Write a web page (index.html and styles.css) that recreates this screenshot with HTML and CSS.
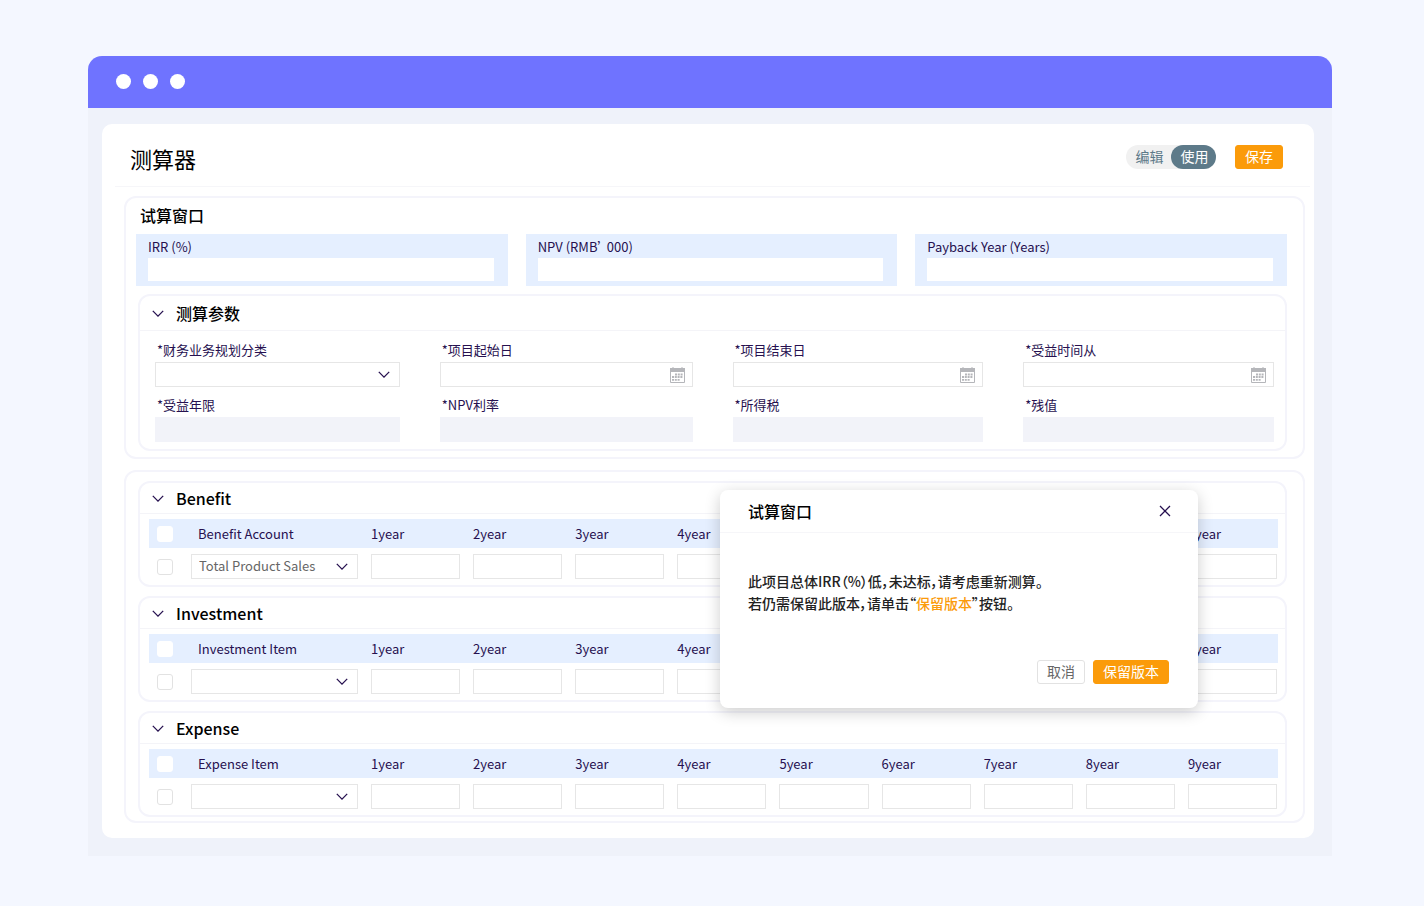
FILE: index.html
```
<!DOCTYPE html>
<html lang="zh-CN">
<head>
	<meta charset="UTF-8">
	<title>测算器</title>
	<link rel="stylesheet" href="styles.css">
</head>
<body>
<svg class="icons" aria-hidden="true">
	<symbol id="arrow" viewBox="0 0 12 8"><path d="M.8 1.9 6 7.1 11.2 1.9" fill="none" stroke="currentColor" stroke-width="1.3"/></symbol>
	<symbol id="cross" viewBox="0 0 12 12"><path d="M1 1 11 11M11 1 1 11" fill="none" stroke="currentColor" stroke-width="1.3"/></symbol>
	<symbol id="calendar" viewBox="0 0 15 16">
		<path d="M.5 2V15.5H14.5V2" fill="none" stroke="currentColor"/>
		<path d="M0 1H2V.5H4V1H11V.5H13V1H15V5H0Z" fill="currentColor"/>
		<path d="M5 7.5H13M2 10H13M2 12.8H10" fill="none" stroke="currentColor" stroke-width="1.8" stroke-dasharray="2 .8"/>
	</symbol>
</svg>

<div class="window">
	<div class="bar"><i></i><i></i><i></i></div>
	<main class="panel">
		<header class="head">
			<h1>测算器</h1>
			<div class="actions">
				<div class="switch">
					<button type="button">编辑</button>
					<button type="button" class="on">使用</button>
				</div>
				<button type="button" class="btn primary">保存</button>
			</div>
		</header>

		<section class="group">
			<h2 class="group_title">试算窗口</h2>
			<div class="results">
				<div class="result"><label for="irr">IRR (%)</label><input type="text" id="irr"></div>
				<div class="result"><label for="npv">NPV (RMB’ 000)</label><input type="text" id="npv"></div>
				<div class="result"><label for="payback">Payback Year (Years)</label><input type="text" id="payback"></div>
			</div>
			<div class="card">
				<div class="card_head params_head"><svg class="arrow"><use href="#arrow"/></svg><h2>测算参数</h2></div>
				<div class="params">
					<div class="field">
						<label for="type">*财务业务规划分类</label>
						<div class="select"><select id="type"><option></option></select><svg class="arrow"><use href="#arrow"/></svg></div>
					</div>
					<div class="field">
						<label for="start">*项目起始日</label>
						<div class="date"><input type="text" id="start"><svg><use href="#calendar"/></svg></div>
					</div>
					<div class="field">
						<label for="end">*项目结束日</label>
						<div class="date"><input type="text" id="end"><svg><use href="#calendar"/></svg></div>
					</div>
					<div class="field">
						<label for="from">*受益时间从</label>
						<div class="date"><input type="text" id="from"><svg><use href="#calendar"/></svg></div>
					</div>
					<div class="field"><label for="years">*受益年限</label><input type="text" id="years" disabled></div>
					<div class="field"><label for="rate">*NPV利率</label><input type="text" id="rate" disabled></div>
					<div class="field"><label for="tax">*所得税</label><input type="text" id="tax" disabled></div>
					<div class="field"><label for="salvage">*残值</label><input type="text" id="salvage" disabled></div>
				</div>
			</div>
		</section>

		<section class="group tables">
			<div class="card">
				<div class="card_head"><svg class="arrow"><use href="#arrow"/></svg><h2>Benefit</h2></div>
				<table>
					<thead>
						<tr>
							<th class="check"><input type="checkbox" aria-label="Select all benefits"></th>
							<th class="item">Benefit Account</th>
							<th>1year</th><th>2year</th><th>3year</th><th>4year</th><th>5year</th><th>6year</th><th>7year</th><th>8year</th><th>9year</th>
						</tr>
					</thead>
					<tbody>
						<tr>
							<td class="check"><input type="checkbox" aria-label="Select benefit"></td>
							<td class="item"><div class="select"><select aria-label="Benefit Account"><option>Total Product Sales</option></select><svg class="arrow"><use href="#arrow"/></svg></div></td>
							<td><input type="text" aria-label="Benefit 1year"></td>
							<td><input type="text" aria-label="Benefit 2year"></td>
							<td><input type="text" aria-label="Benefit 3year"></td>
							<td><input type="text" aria-label="Benefit 4year"></td>
							<td><input type="text" aria-label="Benefit 5year"></td>
							<td><input type="text" aria-label="Benefit 6year"></td>
							<td><input type="text" aria-label="Benefit 7year"></td>
							<td><input type="text" aria-label="Benefit 8year"></td>
							<td><input type="text" aria-label="Benefit 9year"></td>
						</tr>
					</tbody>
				</table>
			</div>

			<div class="card">
				<div class="card_head"><svg class="arrow"><use href="#arrow"/></svg><h2>Investment</h2></div>
				<table>
					<thead>
						<tr>
							<th class="check"><input type="checkbox" aria-label="Select all investments"></th>
							<th class="item">Investment Item</th>
							<th>1year</th><th>2year</th><th>3year</th><th>4year</th><th>5year</th><th>6year</th><th>7year</th><th>8year</th><th>9year</th>
						</tr>
					</thead>
					<tbody>
						<tr>
							<td class="check"><input type="checkbox" aria-label="Select investment"></td>
							<td class="item"><div class="select"><select aria-label="Investment Item"><option></option></select><svg class="arrow"><use href="#arrow"/></svg></div></td>
							<td><input type="text" aria-label="Investment 1year"></td>
							<td><input type="text" aria-label="Investment 2year"></td>
							<td><input type="text" aria-label="Investment 3year"></td>
							<td><input type="text" aria-label="Investment 4year"></td>
							<td><input type="text" aria-label="Investment 5year"></td>
							<td><input type="text" aria-label="Investment 6year"></td>
							<td><input type="text" aria-label="Investment 7year"></td>
							<td><input type="text" aria-label="Investment 8year"></td>
							<td><input type="text" aria-label="Investment 9year"></td>
						</tr>
					</tbody>
				</table>
			</div>

			<div class="card">
				<div class="card_head"><svg class="arrow"><use href="#arrow"/></svg><h2>Expense</h2></div>
				<table>
					<thead>
						<tr>
							<th class="check"><input type="checkbox" aria-label="Select all expenses"></th>
							<th class="item">Expense Item</th>
							<th>1year</th><th>2year</th><th>3year</th><th>4year</th><th>5year</th><th>6year</th><th>7year</th><th>8year</th><th>9year</th>
						</tr>
					</thead>
					<tbody>
						<tr>
							<td class="check"><input type="checkbox" aria-label="Select expense"></td>
							<td class="item"><div class="select"><select aria-label="Expense Item"><option></option></select><svg class="arrow"><use href="#arrow"/></svg></div></td>
							<td><input type="text" aria-label="Expense 1year"></td>
							<td><input type="text" aria-label="Expense 2year"></td>
							<td><input type="text" aria-label="Expense 3year"></td>
							<td><input type="text" aria-label="Expense 4year"></td>
							<td><input type="text" aria-label="Expense 5year"></td>
							<td><input type="text" aria-label="Expense 6year"></td>
							<td><input type="text" aria-label="Expense 7year"></td>
							<td><input type="text" aria-label="Expense 8year"></td>
							<td><input type="text" aria-label="Expense 9year"></td>
						</tr>
					</tbody>
				</table>
			</div>
		</section>
	</main>

	<div class="dialog" role="dialog" aria-labelledby="dialog_title">
		<div class="dialog_head">
			<h2 id="dialog_title">试算窗口</h2>
			<button type="button" class="close" aria-label="关闭"><svg><use href="#cross"/></svg></button>
		</div>
		<p>此项目总体IRR（%）低，未达标，请考虑重新测算。<br>若仍需保留此版本，请单击“<em>保留版本</em>”按钮。</p>
		<div class="dialog_foot">
			<button type="button" class="btn">取消</button>
			<button type="button" class="btn primary">保留版本</button>
		</div>
	</div>
</div>
</body>
</html>
```
FILE: styles.css
```
* { box-sizing: border-box; }
body { margin: 0; padding: 56px 92px 50px 88px; background: #f4f7ff; color: #26104f; font: 14px/22px "Noto Sans CJK SC", sans-serif; }
h1, h2, p { margin: 0; font-weight: 500; color: #000; }
h1 { font-size: 22px; line-height: 30px; font-weight: 400; }
h2 { font-size: 16px; }
input, select, button { margin: 0; padding: 0; font: inherit; color: inherit; border: 0; border-radius: 0; background: none; }
button { cursor: pointer; }
.icons { display: none; }

.window { position: relative; padding-bottom: 18px; background: #eff2fa; border-radius: 14px 14px 0 0; }
.bar { display: flex; align-items: center; gap: 12px; height: 52px; padding: 0 0 2px 28px; background: #6f73ff; border-radius: 14px 14px 0 0; }
.bar i { width: 15px; height: 15px; background: #fff; border-radius: 50%; }

.panel { margin: 16px 18px 0 14px; padding: 0 9px 15px 22px; background: #fff; border-radius: 10px; }
.head { display: flex; justify-content: space-between; align-items: flex-start; margin: 0 -5px 9px -9px; padding: 21px 27px 11px 15px; border-bottom: 1px solid #f6f6f9; }
.head h1 { line-height: 26px; margin-bottom: 4px; }
.actions { display: flex; gap: 19px; }
.switch { display: flex; background: #f1f1f1; border-radius: 12px; color: #5d7a89; }
.switch button { width: 45px; height: 24px; padding: 0 0 2px 2px; border-radius: 12px; }
.switch .on { background: #5d7a89; color: #fff; }
.btn { height: 24px; padding: 0 9px 2px; border: 1px solid #e2e2e2; border-radius: 3px; line-height: 20px; color: #666; }
.btn.primary { border-color: #fb9b0a; background: #fb9b0a; color: #fff; }

.group { padding: 0 16px 6px 10px; border: 2px solid #f4f4fb; border-radius: 12px; }
.group_title { padding: 0 0 2px 4px; line-height: 34px; }
.results { display: grid; grid-template-columns: repeat(3, 1fr); gap: 18px; margin-bottom: 8px; }
.result { padding: 2px 14px 5px 12px; background: #e5efff; }
.result label { display: block; font-size: 13px; font-feature-settings: "palt"; }
.result input { display: block; width: 100%; height: 23px; background: #fff; }

.card { margin-left: 2px; border: 2px solid #f4f4fb; border-radius: 12px; }
.card_head { display: flex; align-items: center; gap: 12px; height: 31px; padding-left: 12px; border-bottom: 1px solid #f4f4f8; }
.params_head { height: 35px; }
.arrow { width: 12px; height: 8px; color: #26104f; }

.params { display: grid; grid-template-columns: 245fr 253fr 251fr 251fr; gap: 7px 40px; padding: 8px 11px 7px 15px; }
.field label { display: block; padding: 0 0 2px 2px; font-size: 13px; line-height: 21px; }
.field > input { display: block; width: 100%; height: 25px; background: #f2f3f9; }
.date { display: flex; align-items: center; height: 25px; padding-right: 7px; border: 1px solid #e6e6e6; }
.date input { flex: 1; min-width: 0; }
.date svg { width: 15px; height: 16px; color: #b5b6ba; }
.select { position: relative; }
.select select { display: block; width: 100%; height: 25px; padding: 0 26px 2px 7px; appearance: none; border: 1px solid #e6e6e6; font-size: 13px; color: #666; background: #fff; }
.select .arrow { position: absolute; right: 10px; top: 8px; pointer-events: none; }

.tables { display: flex; flex-direction: column; gap: 9px; margin-top: 11px; padding-top: 9px; padding-bottom: 4px; }
.tables .card { padding-bottom: 6px; }
table { width: calc(100% - 16px); margin: 5px 7px 0 9px; table-layout: fixed; border-collapse: collapse; }
th { height: 29px; padding: 0 1px 0 12px; background: #e5efff; font-size: 13px; font-weight: 400; text-align: left; }
td { padding: 6px 1px 0 12px; }
td input[type=text] { display: block; width: 100%; height: 25px; border: 1px solid #e6e6e6; }
.check { width: 42px; padding-left: 8px; }
th.item { width: 168px; padding-left: 7px; }
td.item { padding-left: 0; }
input[type=checkbox] { display: block; width: 16px; height: 16px; appearance: none; border: 1px solid #e2e2e2; border-radius: 3px; background: #fff; }
th input[type=checkbox] { border-color: #fff; }

.dialog { position: absolute; top: 434px; right: 134px; width: 478px; padding-bottom: 24px; background: #fff; border-radius: 8px; box-shadow: 0 4px 16px rgba(0, 0, 0, .2); }
.dialog_head { display: flex; justify-content: space-between; align-items: center; height: 43px; padding: 0 26px 0 28px; border-bottom: 1px solid #f6f6f9; }
.close { display: flex; padding: 1px; color: #26104f; }
.close svg { width: 12px; height: 12px; }
.dialog p { padding: 37px 28px 46px; color: #222; font-feature-settings: "palt"; }
.dialog em { font-style: normal; color: #fb9b0a; }
.dialog_foot { display: flex; justify-content: flex-end; gap: 8px; padding-right: 29px; }
```
